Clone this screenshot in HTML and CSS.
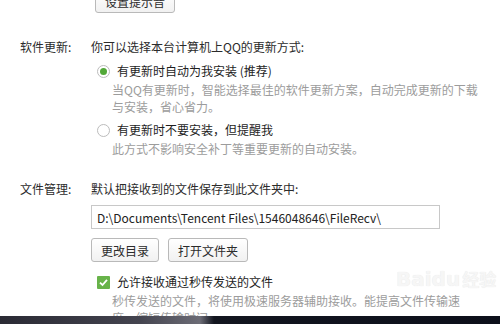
FILE: index.html
```html
<!DOCTYPE html>
<html lang="zh-CN">
<head>
  <meta charset="UTF-8">
  <meta name="viewport" content="width=device-width, initial-scale=1.0">
  <title>系统设置 - 文件管理</title>
  <link rel="stylesheet" href="styles.css">
</head>
<body>
  <div class="window">
    <div class="content">
      <!-- 提示音 -->
      <section class="group group-sound">
        <div class="group-label"></div>
        <div class="group-body">
          <button class="btn btn-sound">设置提示音</button>
        </div>
      </section>

      <!-- 软件更新 -->
      <section class="group group-update">
        <div class="group-label">软件更新:</div>
        <div class="group-body">
          <div class="group-title">你可以选择本台计算机上QQ的更新方式:</div>
          <div class="option">
            <span class="radio checked"></span>
            <span class="option-text">有更新时自动为我安装 (推荐)</span>
          </div>
          <div class="desc">当QQ有更新时，智能选择最佳的软件更新方案，自动完成更新的下载与安装，省心省力。</div>
          <div class="option">
            <span class="radio"></span>
            <span class="option-text">有更新时不要安装，但提醒我</span>
          </div>
          <div class="desc">此方式不影响安全补丁等重要更新的自动安装。</div>
        </div>
      </section>

      <!-- 文件管理 -->
      <section class="group group-file">
        <div class="group-label">文件管理:</div>
        <div class="group-body">
          <div class="group-title">默认把接收到的文件保存到此文件夹中:</div>
          <input class="path-input" type="text" value="D:\Documents\Tencent Files\1546048646\FileRecv\">
          <div class="btn-row">
            <button class="btn">更改目录</button>
            <button class="btn">打开文件夹</button>
          </div>
          <div class="option option-check">
            <span class="checkbox checked">
              <svg width="13" height="13" viewBox="0 0 13 13"><path d="M3 6.6 L5.5 9 L10 3.8" fill="none" stroke="#fff" stroke-width="1.8"/></svg>
            </span>
            <span class="option-text">允许接收通过秒传发送的文件</span>
          </div>
          <div class="desc">秒传发送的文件，将使用极速服务器辅助接收。能提高文件传输速度，缩短传输时间。</div>
        </div>
      </section>

      <div class="watermark"><span class="wm-latin">Bai</span><span class="wm-du">du</span><span class="wm-cn">经验</span></div>
    </div>
    <div class="taskbar"></div>
  </div>
</body>
</html>
```

FILE: styles.css
```css
* {
  box-sizing: border-box;
}

body {
  margin: 0;
  font-family: "Noto Sans CJK SC", "Noto Sans", sans-serif;
  font-size: 12px;
  color: #333;
  background: #fff;
}

.window {
  width: 500px;
  height: 324px;
  display: flex;
  flex-direction: column;
  overflow: hidden;
}

.content {
  position: relative;
  flex: 1;
  min-height: 0;
  overflow: hidden;
  padding-right: 19px;
}

.group {
  display: grid;
  grid-template-columns: 71px 1fr;
  padding-left: 20px;
  line-height: 18px;
}

.group-sound {
  margin-top: -11px;
}

.group-update {
  margin-top: 25px;
}

.group-file {
  margin-top: 23px;
}

.group-label,
.group-title {
  color: #2b2b2b;
}

.btn {
  height: 24px;
  padding: 0 9px;
  font-family: inherit;
  font-size: 12px;
  color: #2b2b2b;
  background: linear-gradient(to bottom, #ffffff, #f1f1f1);
  border: 1px solid #b9b9b9;
  border-radius: 3px;
}

.btn-sound {
  margin-left: 4px;
}

.option {
  display: flex;
  align-items: center;
  gap: 7px;
  margin-top: 6px;
  padding-left: 6px;
  color: #1e1e1e;
}

.radio {
  position: relative;
  width: 13px;
  height: 13px;
  border: 1px solid #bcbcbc;
  border-radius: 50%;
  background: #fff;
  flex: none;
}

.radio.checked::after {
  content: "";
  position: absolute;
  left: 2px;
  top: 2px;
  width: 7px;
  height: 7px;
  border-radius: 50%;
  background: #52a838;
}

.checkbox {
  display: flex;
  width: 13px;
  height: 13px;
  background: #68b34a;
  border-radius: 1px;
  flex: none;
}

.desc {
  margin-top: 1px;
  padding-left: 21px;
  line-height: 17px;
  color: #9c9c9c;
}

.path-input {
  display: block;
  width: 349px;
  height: 24px;
  margin-top: 7px;
  padding: 0 5px;
  font-family: inherit;
  font-size: 12px;
  color: #222;
  border: 1px solid #c8c8c8;
  background: #fff;
}

.btn-row {
  display: flex;
  gap: 9px;
  margin-top: 9px;
}

.option-check {
  margin-top: 11px;
}

/* 图片水印 */
.watermark {
  position: absolute;
  left: 396px;
  top: 268px;
  font-family: "DejaVu Sans", sans-serif;
  font-weight: bold;
  font-size: 20px;
  color: #f6f6f6;
  text-shadow: 0 0 1px #e2e2e2;
  line-height: 22px;
}

.wm-cn {
  font-family: "Noto Sans CJK SC", sans-serif;
  font-size: 17px;
  margin-left: 2px;
}

.taskbar {
  height: 8px;
  flex: none;
  background: linear-gradient(to right, #2a2a34 0, #44444f 140px, #6c6c76 200px, #12151f 214px, #0c0f1a 100%);
}
```
